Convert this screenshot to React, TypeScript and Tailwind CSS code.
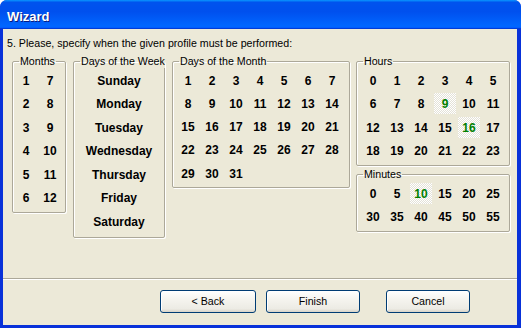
import React from "react";

const FONT = "font-['Liberation_Sans',Arial,sans-serif]";

function Cell({ v, hl }: { v: string | number; hl?: boolean }) {
  return (
    <div className="h-[23.5px] flex justify-center items-start">
      {hl ? (
        <span className="w-[22px] h-[21px] flex justify-center leading-[22px] text-[#008000] bg-[repeating-conic-gradient(#ffffff_0%_25%,#e4e2d8_0%_50%)] bg-[length:2px_2px]">
          {v}
        </span>
      ) : (
        <span className="leading-[23.5px]">{v}</span>
      )}
    </div>
  );
}

function Group({
  label,
  className,
  children,
}: {
  label: string;
  className: string;
  children: React.ReactNode;
}) {
  return (
    <fieldset
      className={`min-w-0 shrink-0 border border-[#aca899] rounded-[2px] shadow-[inset_1px_1px_0_#ffffff,1px_1px_0_#ffffff] ${className}`}
    >
      <legend className="ml-[6px] px-[1px] text-[10.65px] leading-[13px] whitespace-nowrap text-black">
        {label}
      </legend>
      {children}
    </fieldset>
  );
}

function XPButton({ label, w, className = "" }: { label: string; w: string; className?: string }) {
  return (
    <button
      className={`${w} h-[23px] border border-[#003c74] rounded-[3px] bg-[linear-gradient(to_bottom,#ffffff_0%,#f5f4ef_40%,#ecebe4_85%,#d8d3c8_100%)] shadow-[inset_1px_1px_0_#ffffff] text-[10.65px] text-black flex items-center justify-center ${className}`}
    >
      {label}
    </button>
  );
}

export default function App() {
  const months = [1, 7, 2, 8, 3, 9, 4, 10, 5, 11, 6, 12];
  const days = ["Sunday", "Monday", "Tuesday", "Wednesday", "Thursday", "Friday", "Saturday"];
  const dom = Array.from({ length: 31 }, (_, i) => i + 1);
  const hours = Array.from({ length: 24 }, (_, i) => i);
  const minutes = Array.from({ length: 12 }, (_, i) => i * 5);

  return (
    <div className={`${FONT} w-[521px] h-[328px] flex flex-col bg-[#0831d9] rounded-t-[7px] overflow-hidden`}>
      {/* Title bar */}
      <div className="h-[29px] shrink-0 bg-[linear-gradient(180deg,#0997ff_0%,#0053ee_8%,#0050ee_40%,#0066ff_88%,#0066ff_93%,#005bff_95%,#003dd7_96%,#003dd7_100%)] pl-[7px] pt-[9.5px]">
        <span className="block text-white font-bold text-[13px] leading-[14px] [text-shadow:1px_1px_0_#0a1b80]">
          Wizard
        </span>
      </div>

      {/* Client area */}
      <div className="flex-1 ml-[3px] mr-[4px] mb-[3px] bg-[#ece9d8] flex flex-col">
        <div className="h-[249px] shrink-0 pt-[8px]">
          <div className="pl-[4px] text-[10.65px] leading-[13px] text-black">
            5. Please, specify when the given profile must be performed:
          </div>

          <div className="flex items-start mt-[5px] ml-[9px] font-bold text-[12px] text-black">
            <Group label="Months" className="w-[54px] h-[158px] font-normal">
              <div className="grid grid-cols-[24px_24px] pl-[1px] pt-[1.5px] font-bold text-[12px]">
                {months.map((m) => (
                  <Cell key={m} v={m} />
                ))}
              </div>
            </Group>

            <Group label="Days of the Week" className="w-[92px] h-[183px] ml-[7px] font-normal">
              <div className="flex flex-col pt-[1.5px] font-bold text-[12px]">
                {days.map((d) => (
                  <Cell key={d} v={d} />
                ))}
              </div>
            </Group>

            <Group label="Days of the Month" className="w-[178px] h-[133px] ml-[7px] font-normal">
              <div className="grid grid-cols-[repeat(7,24px)] grid-rows-[repeat(5,23.3px)] pl-[3px] pt-[1.5px] font-bold text-[12px]">
                {dom.map((d) => (
                  <Cell key={d} v={d} />
                ))}
              </div>
            </Group>

            <div className="ml-[6px] w-[154px] shrink-0 flex flex-col gap-[2px]">
              <Group label="Hours" className="w-[154px] h-[111px] font-normal">
                <div className="grid grid-cols-[repeat(6,24px)] pl-[4px] pt-[1.5px] font-bold text-[12px]">
                  {hours.map((h) => (
                    <Cell key={h} v={h} hl={h === 9 || h === 16} />
                  ))}
                </div>
              </Group>
              <Group label="Minutes" className="w-[154px] h-[64px] font-normal">
                <div className="grid grid-cols-[repeat(6,24px)] pl-[4px] pt-[1.5px] font-bold text-[12px]">
                  {minutes.map((m) => (
                    <Cell key={m} v={m} hl={m === 10} />
                  ))}
                </div>
              </Group>
            </div>
          </div>
        </div>

        {/* Separator */}
        <div className="h-[2px] shrink-0 border-t border-[#aca899] border-b border-b-white" />

        {/* Buttons */}
        <div className="flex-1 flex items-start pt-[10px] pl-[157px]">
          <XPButton label="< Back" w="w-[96px]" />
          <XPButton label="Finish" w="w-[94px]" className="ml-[10px]" />
          <XPButton label="Cancel" w="w-[84px]" className="ml-[26px]" />
        </div>
      </div>
    </div>
  );
}
